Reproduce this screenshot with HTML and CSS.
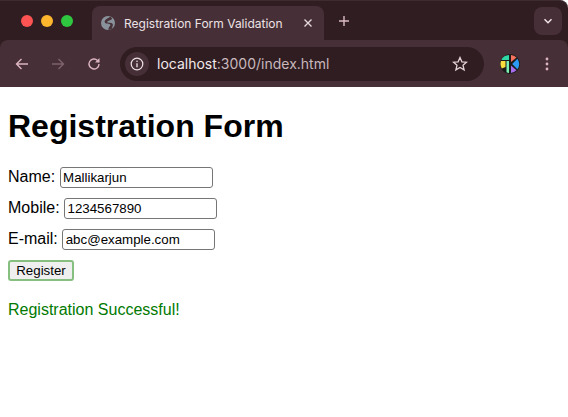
FILE: index.html
```html
<!DOCTYPE html>
<html lang="en">
<head>
  <meta charset="UTF-8">
  <meta name="viewport" content="width=device-width, initial-scale=1.0">
  <title>Registration Form Validation</title>
  <link rel="stylesheet" href="styles.css">
</head>
<body>

  <!-- Browser chrome -->
  <header class="chrome">
    <div class="tabstrip">
      <div class="lights">
        <span class="light light-red"></span>
        <span class="light light-yellow"></span>
        <span class="light light-green"></span>
      </div>
      <div class="tab">
        <svg class="globe" width="14" height="14" viewBox="0 0 16 16">
          <circle cx="8" cy="8" r="8" fill="#89929b"/>
          <path d="M10.500 .6C9 2.500 6.500 3 5 4.500 3.500 6 4 8 6 8.600c1.800.5 3.800.2 4.500 1.200.6 1-.6 2.200-1.500 3.200-.5.800-.6 1.800-.4 2.900 1.400-.1 2.700-.6 3.800-1.400.5-1.700 1.200-3.200 1.200-4.500 0-1.300-1.500-2.200-3.500-2.300-1.500-.1-2.800 0-3-.8-.1-.8 1.500-1.400 3-2 1.100-.4 2-1 2.700-1.800A8 8 0 0 0 10.500 .6z" fill="#48323a"/>
        </svg>
        <span class="tab-title">Registration Form Validation</span>
        <svg class="tab-close" width="10" height="10" viewBox="0 0 10 10">
          <path d="M1.500 1.500l7 7M8.500 1.500l-7 7" stroke="#e6dadd" stroke-width="1.300"/>
        </svg>
      </div>
      <svg class="new-tab" width="12" height="12" viewBox="0 0 12 12">
        <path d="M6 1v10M1 6h10" stroke="#dcbcc6" stroke-width="1.400"/>
      </svg>
      <div class="tab-search">
        <svg width="10" height="10" viewBox="0 0 10 10">
          <path d="M1.500 3.300L5 6.800l3.500-3.500" fill="none" stroke="#f0e4e7" stroke-width="1.500"/>
        </svg>
      </div>
    </div>
    <div class="toolbar">
      <svg class="tool" width="16" height="16" viewBox="0 0 16 16">
        <path d="M14 8H3M7.500 3L2.500 8l5 5" fill="none" stroke="#dcb4c0" stroke-width="1.400"/>
      </svg>
      <svg class="tool" width="16" height="16" viewBox="0 0 16 16">
        <path d="M2 8h11M8.500 3l5 5-5 5" fill="none" stroke="#7d646c" stroke-width="1.400"/>
      </svg>
      <svg class="tool" width="16" height="16" viewBox="0 0 16 16">
        <path d="M13 8a5 5 0 1 1-1.500-3.600L13 6" fill="none" stroke="#dcb4c0" stroke-width="1.400"/>
        <path d="M13.500 2v4.500H9z" fill="#dcb4c0"/>
      </svg>
      <div class="omnibox">
        <span class="site-info">
          <svg width="14" height="14" viewBox="0 0 14 14">
            <circle cx="7" cy="7" r="5.800" fill="none" stroke="#efe3e6" stroke-width="1.200"/>
            <path d="M7 6.200v4" stroke="#efe3e6" stroke-width="1.300"/>
            <circle cx="7" cy="4.300" r=".8" fill="#efe3e6"/>
          </svg>
        </span>
        <span class="url"><span class="url-host">localhost</span>:3000/index.html</span>
        <svg class="star" width="16" height="16" viewBox="0 0 16 16">
          <path d="M8 1.500l1.900 4.300 4.600.4-3.500 3 1.100 4.600L8 11.400l-4.100 2.400L5 9.200l-3.500-3 4.600-.4z" fill="none" stroke="#e2d2d7" stroke-width="1.300"/>
        </svg>
      </div>
      <svg class="avatar" width="20" height="20" viewBox="0 0 20 20">
        <circle cx="10" cy="10" r="10" fill="#1b1b1b"/>
        <path d="M9 1.100A9 9 0 0 0 1.300 6H9z" fill="#2fd8a4"/>
        <path d="M11 1.100V8l5.500-4.600A9 9 0 0 0 11 1.100z" fill="#f5735c"/>
        <path d="M1 7a9 9 0 0 0 .8 7.600L5.500 13V7z" fill="#f9dd3c"/>
        <path d="M6.500 7H9v11.900a9 9 0 0 1-2.500-.7z" fill="#7cf0b4"/>
        <path d="M12.200 10l5.200-5.200a9 9 0 0 1 0 10.400z" fill="#2b9bf4"/>
        <path d="M11 11.500v7.400a9 9 0 0 0 5.500-2.600z" fill="#a86cec"/>
      </svg>
      <svg class="menu" width="4" height="14" viewBox="0 0 4 14">
        <circle cx="2" cy="2" r="1.400" fill="#dcb4c0"/>
        <circle cx="2" cy="7" r="1.400" fill="#dcb4c0"/>
        <circle cx="2" cy="12" r="1.400" fill="#dcb4c0"/>
      </svg>
    </div>
  </header>

  <!-- Page content -->
  <main class="page">
    <h1>Registration Form</h1>
    <form>
      <div class="field">
        <label for="name">Name:</label>
        <input type="text" id="name" value="Mallikarjun">
      </div>
      <div class="field">
        <label for="mobile">Mobile:</label>
        <input type="text" id="mobile" value="1234567890">
      </div>
      <div class="field">
        <label for="email">E-mail:</label>
        <input type="text" id="email" value="abc@example.com">
      </div>
      <button type="button">Register</button>
    </form>
    <p class="success">Registration Successful!</p>
  </main>

</body>
</html>
```

FILE: styles.css
```css
* {
  box-sizing: border-box;
}
html, body {
  margin: 0;
  background: #fff;
}
body {
  font-family: "Liberation Sans", Arial, sans-serif;
  color: #000;
  overflow: hidden;
}

/* Browser chrome */
.chrome {
  height: 87px;
  background: #2f1d21;
  border-top: 1px solid #3e2b30;
  border-top-right-radius: 8px;
}
.tabstrip {
  display: flex;
  align-items: flex-end;
  height: 39px;
  padding-right: 6px;
}
.lights {
  display: flex;
  gap: 8px;
  align-self: center;
  width: 92px;
  padding-left: 21px;
}
.light {
  width: 12px;
  height: 12px;
  border-radius: 50%;
}
.light-red { background: #fd5353; }
.light-yellow { background: #fdb52e; }
.light-green { background: #2fc73f; }
.tab {
  display: flex;
  align-items: center;
  width: 232px;
  height: 34px;
  padding: 0 11px 0 9px;
  background: #472f37;
  border-radius: 8px 8px 0 0;
}
.tab-title {
  flex: 1;
  margin-left: 9px;
  font-family: Inter, sans-serif;
  font-size: 12px;
  color: #ece2e5;
  white-space: nowrap;
}
.new-tab {
  align-self: center;
  margin: 0 0 0 14px;
}
.tab-search {
  display: flex;
  align-items: center;
  justify-content: center;
  align-self: center;
  width: 28px;
  height: 28px;
  margin-left: auto;
  background: #472f37;
  border-radius: 8px;
}
.toolbar {
  display: flex;
  align-items: center;
  height: 47px;
  padding-left: 14px;
  background: #472f37;
  border-radius: 8px 8px 0 0;
}
.tool {
  margin-right: 20px;
}
.tool:nth-child(3) {
  margin-right: 18px;
}
.omnibox {
  display: flex;
  align-items: center;
  width: 364px;
  height: 34px;
  padding: 0 16px 0 5px;
  background: #2f1d21;
  border-radius: 17px;
}
.site-info {
  display: flex;
  align-items: center;
  justify-content: center;
  width: 24px;
  height: 24px;
  background: #472f37;
  border-radius: 50%;
}
.url {
  flex: 1;
  margin-left: 8px;
  font-family: Inter, sans-serif;
  font-size: 14px;
  color: #c9b8bd;
}
.url-host {
  color: #f2e9eb;
}
.avatar {
  margin-left: 16px;
}
.menu {
  margin-left: 25px;
}

/* Page content */
.page {
  padding: 0 8px;
}
h1 {
  margin: 21px 0 22px;
  font-size: 32px;
  line-height: 37px;
}
.field {
  display: flex;
  align-items: center;
  gap: 4.450px;
  margin-bottom: 10px;
  font-size: 16px;
}
.field label {
  margin-top: -2px;
}
input {
  width: 153px;
  height: 21px;
  padding: 1px 2.500px;
  border: 1px solid #767676;
  border-radius: 3px;
  font-family: "Liberation Sans", Arial, sans-serif;
  font-size: 13.300px;
  background: #fff;
  color: #000;
}
button {
  display: block;
  width: 66px;
  height: 21px;
  padding: 0;
  border: 2px solid #86bf7f;
  border-radius: 3px;
  background: #efefef;
  font-family: "Liberation Sans", Arial, sans-serif;
  font-size: 13.300px;
  color: #000;
}
.success {
  margin: 20px 0 0;
  font-size: 16px;
  line-height: 18px;
  color: #007a00;
}
```
